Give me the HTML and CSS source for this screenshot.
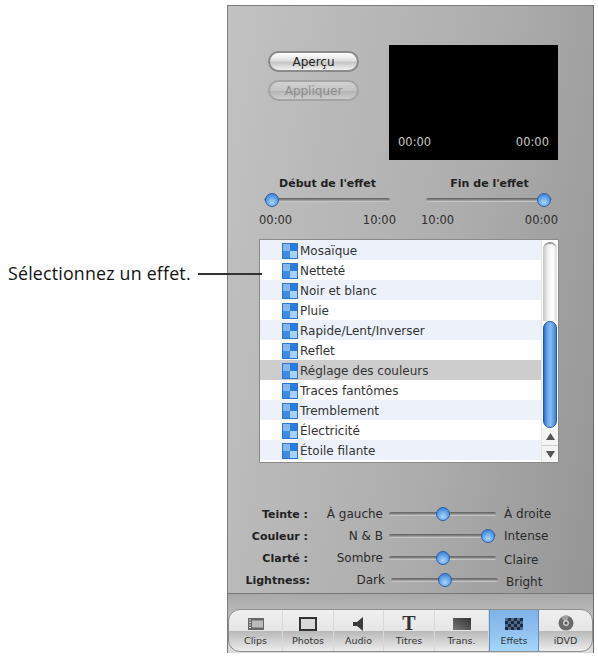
FILE: index.html
```html
<!DOCTYPE html>
<html lang="fr">
<head>
<meta charset="utf-8">
<title>Effets</title>
<link rel="stylesheet" href="styles.css">
</head>
<body>
<svg class="defs" width="0" height="0" aria-hidden="true">
  <symbol id="fx" viewBox="0 0 16 16">
    <rect width="16" height="16" fill="#2b74cf"/>
    <rect x="1" y="1" width="7" height="7" fill="#86b7ec"/>
    <rect x="8" y="1" width="7" height="7" fill="#2a7be0"/>
    <rect x="1" y="8" width="7" height="7" fill="#3f8be4"/>
    <rect x="8" y="8" width="7" height="7" fill="#a9d0f5"/>
  </symbol>
</svg>
<div class="page">
  <div class="callout">
    <span class="callout-text">Sélectionnez un effet.</span>
    <span class="callout-line"></span>
  </div>
  <div class="panel">
    <div class="editor">
      <div class="preview-row">
        <div class="buttons">
          <button class="pill">Aperçu</button>
          <button class="pill pill-off">Appliquer</button>
        </div>
        <div class="video">
          <span>00:00</span><span>00:00</span>
        </div>
      </div>
      <div class="trim-row">
        <div class="trim">
          <div class="trim-title">Début de l'effet</div>
          <div class="slider trim-slider"><i class="knob" style="left:1px"></i></div>
          <div class="trim-times"><span>00:00</span><span>10:00</span></div>
        </div>
        <div class="trim">
          <div class="trim-title">Fin de l'effet</div>
          <div class="slider trim-slider"><i class="knob" style="left:111px"></i></div>
          <div class="trim-times"><span>10:00</span><span>00:00</span></div>
        </div>
      </div>
      <div class="list">
        <ul class="rows">
          <li><svg class="fx"><use href="#fx"/></svg>Mosaïque</li>
          <li><svg class="fx"><use href="#fx"/></svg>Netteté</li>
          <li><svg class="fx"><use href="#fx"/></svg>Noir et blanc</li>
          <li><svg class="fx"><use href="#fx"/></svg>Pluie</li>
          <li><svg class="fx"><use href="#fx"/></svg>Rapide/Lent/Inverser</li>
          <li><svg class="fx"><use href="#fx"/></svg>Reflet</li>
          <li class="selected"><svg class="fx"><use href="#fx"/></svg>Réglage des couleurs</li>
          <li><svg class="fx"><use href="#fx"/></svg>Traces fantômes</li>
          <li><svg class="fx"><use href="#fx"/></svg>Tremblement</li>
          <li><svg class="fx"><use href="#fx"/></svg>Électricité</li>
          <li><svg class="fx"><use href="#fx"/></svg>Étoile filante</li>
        </ul>
        <div class="scrollbar">
          <div class="scroll-track"></div>
          <div class="scroll-thumb"></div>
          <div class="scroll-arrow"><svg width="9" height="7" viewBox="0 0 9 7"><path d="M4.5 0 9 7H0z" fill="#555"/></svg></div>
          <div class="scroll-arrow scroll-arrow-down"><svg width="9" height="7" viewBox="0 0 9 7"><path d="M0 0h9L4.500 7z" fill="#555"/></svg></div>
        </div>
      </div>
      <div class="adjust">
        <div class="adjust-row">
          <b>Teinte :</b><span class="low-label">À gauche</span>
          <div class="slider"><i class="knob" style="left:47px"></i></div>
          <span class="high-label">À droite</span>
        </div>
        <div class="adjust-row">
          <b>Couleur :</b><span class="low-label">N &amp; B</span>
          <div class="slider"><i class="knob" style="left:92px"></i></div>
          <span class="high-label">Intense</span>
        </div>
        <div class="adjust-row">
          <b>Clarté :</b><span class="low-label">Sombre</span>
          <div class="slider"><i class="knob" style="left:47px"></i></div>
          <span class="high-label high-label-low">Claire</span>
        </div>
        <div class="adjust-row adjust-row-last">
          <b>Lightness:</b><span class="low-label">Dark</span>
          <div class="slider"><i class="knob" style="left:47px"></i></div>
          <span class="high-label high-label-low">Bright</span>
        </div>
      </div>
    </div>
    <div class="dock">
      <nav class="tabs">
        <div class="tab">
          <svg width="18" height="14" viewBox="0 0 18 14"><rect x="1" y="1" width="16" height="12" fill="#666"/><rect x="5" y="3.500" width="11" height="7" fill="#bbb"/><path d="M2 3h2M2 5.500h2M2 8h2M2 10.500h2" stroke="#ddd" stroke-width="1"/></svg>
          <span>Clips</span>
        </div>
        <div class="tab">
          <svg width="18" height="14" viewBox="0 0 18 14"><rect x="1" y="1" width="16" height="12" fill="#d8d8d8" stroke="#333" stroke-width="2"/></svg>
          <span>Photos</span>
        </div>
        <div class="tab">
          <svg width="14" height="14" viewBox="0 0 14 14"><path d="M1 5h4l6-5v14L5 9H1z" fill="#3a3a3a"/></svg>
          <span>Audio</span>
        </div>
        <div class="tab">
          <em class="glyph">T</em>
          <span>Titres</span>
        </div>
        <div class="tab">
          <svg width="18" height="14" viewBox="0 0 18 14"><defs><linearGradient id="tr" x1="0" y1="1" x2="1" y2="0"><stop offset="0" stop-color="#777"/><stop offset="1" stop-color="#333"/></linearGradient></defs><rect width="18" height="12" y="1" fill="url(#tr)"/></svg>
          <span>Trans.</span>
        </div>
        <div class="tab tab-on">
          <svg width="18" height="14" viewBox="0 0 18 14"><rect y="1" width="18" height="12" fill="#1c2a40"/><path d="M0 1h3v3H0zM6 1h3v3H6zM12 1h3v3h-3zM3 4h3v3H3zM9 4h3v3H9zM15 4h3v3h-3zM0 7h3v3H0zM6 7h3v3H6zM12 7h3v3h-3zM3 10h3v3H3zM9 10h3v3H9zM15 10h3v3h-3z" fill="#4d6a8c"/></svg>
          <span>Effets</span>
        </div>
        <div class="tab">
          <svg width="16" height="16" viewBox="0 0 16 16"><circle cx="8" cy="8" r="7.500" fill="#6a6a6a"/><path d="M8 8 3 2.500A7.500 7.500 0 0 1 11 1.200z" fill="#a0a0a0"/><circle cx="8" cy="8" r="3" fill="#ccc"/><circle cx="8" cy="8" r="1.500" fill="#555"/></svg>
          <span>iDVD</span>
        </div>
      </nav>
    </div>
  </div>
</div>
</body>
</html>
```
FILE: styles.css
```css
* { box-sizing: border-box; }
html, body { margin: 0; padding: 0; background: #fff; }
body { font-family: "DejaVu Sans", sans-serif; font-size: 11px; color: #2a2a2a; }
.defs { position: absolute; }
.page { display: flex; width: 598px; height: 659px; overflow: hidden; }

.callout { width: 227px; flex: none; padding: 262px 0 0 8px; position: relative; }
.callout-text { font-family: "Open Sans", sans-serif; font-size: 17.800px; letter-spacing: 0.2px; line-height: 22px; color: #111; white-space: nowrap; }
.callout-line { position: absolute; left: 198px; top: 273px; width: 64px; height: 2px; background: #333; z-index: 2; }

.panel { width: 367px; height: 648px; margin-top: 5px; display: flex; flex-direction: column; flex: none;
  border: 1px solid #7c7c7c; border-bottom: 0; border-right-color: #6e6e6e;
  background: linear-gradient(100deg, #c2c2c2, #aeaeae 55%, #949494); }

.editor { height: 588px; flex: none; padding-top: 39px; border-bottom: 1px solid #777; }

.preview-row { display: flex; padding-left: 40px; height: 115px; }
.buttons { width: 91px; display: flex; flex-direction: column; gap: 8px; padding-top: 6px; margin-right: 30px; }
.pill { height: 21px; width: 91px; padding: 0; border-radius: 11px; border: 2px solid #8a8a8a;
  background: linear-gradient(#fff, #e0e0e0 45%, #c4c4c4 55%, #f2f2f2);
  font: 12px "DejaVu Sans", sans-serif; color: #222; }
.pill-off { border-color: #a4a4a4; color: #8d8d8d; background: linear-gradient(#d2d2d2, #c4c4c4 50%, #b4b4b4 55%, #cdcdcd); }
.video { width: 169px; height: 115px; background: #000; color: #c8c8c8; font-size: 11.500px; display: flex;
  justify-content: space-between; align-items: flex-end; padding: 0 9px 11px 9px; }

.trim-row { display: flex; gap: 25px; padding: 17px 0 0 31px; }
.trim { width: 137px; }
.trim-title { text-align: center; font-weight: bold; font-size: 11px; line-height: 14px; white-space: nowrap; color: #222; }
.trim-slider { margin: 2px 6px 0 5px; }
.trim-times { display: flex; justify-content: space-between; font-size: 11.500px; line-height: 14px; margin-top: 6px; color: #2c2c2c; }

.slider { position: relative; height: 14px; }
.slider::before { content: ""; position: absolute; left: 0; right: 0; top: 5px; height: 4px; border-radius: 2px;
  background: linear-gradient(#5e5e5e, #8d8d8d 50%, #d8d8d8); }
.knob { position: absolute; top: 0; width: 14px; height: 14px; border-radius: 50%; border: 1px solid #2a5da8;
  background: radial-gradient(circle at 50% 70%, #a9d6fb, #5d9fe6 55%, #2e6fc4); }

.list { display: flex; margin: 12px 0 0 31px; width: 300px; height: 224px; border: 1px solid #8a8a8a; background: #fff; }
.rows { list-style: none; margin: 0; padding: 0; width: 281px; flex: none; }
.rows li { height: 20px; display: flex; align-items: center; padding: 1px 0 0 22px; gap: 2px; font-size: 12px; white-space: nowrap; color: #333; }
.rows li:nth-child(odd) { background: #edf2fa; }
.rows li.selected { background: #cdcdcd; }
.fx { width: 16px; height: 16px; flex: none; }

.scrollbar { flex: 1; display: flex; flex-direction: column; border-left: 1px solid #e4e4e4; }
.scroll-track { height: 79px; margin: 2px 1px 0; border-radius: 8px 8px 0 0; border-top: 2px solid #9a9a9a;
  background: linear-gradient(90deg, #c4c4c4, #f4f4f4 40%, #fff 70%, #ddd); }
.scroll-thumb { height: 107px; margin: 0 1px; border-radius: 8px; border: 1px solid #1d57ad;
  background: linear-gradient(90deg, #2d6fc8, #6fa9ec 30%, #8abcf2 55%, #3a7fd8); }
.scroll-arrow { height: 17px; display: flex; align-items: center; justify-content: center; background: #f4f4f4; }
.scroll-arrow-down { border-top: 1px solid #ccc; }

.adjust { margin-top: 40px; font-size: 12px; }
.adjust-row { display: grid; grid-template-columns: 80px 69px 107px 1fr; column-gap: 6px; align-items: center; height: 22px; }
.adjust-row b { text-align: right; white-space: nowrap; color: #222; font-size: 11px; }
.low-label { text-align: right; white-space: nowrap; }
.high-label { white-space: nowrap; padding-left: 2px; }
.high-label-low { margin-top: 4px; }
.adjust-row-last { padding-left: 2px; }

.dock { flex: 1; padding: 15px 0 0 0; background: linear-gradient(#a8a8a8, #c8c8c8 60%, #dcdcdc); }
.tabs { display: grid; grid-template-columns: 54px 51px 50px 51px 54px 50px 1fr; height: 43px; border: 1px solid #8e8e8e;
  border-radius: 12px; overflow: hidden; background: linear-gradient(#efefef, #e6e6e6 50%, #b8b8b8 52%, #ededed); }
.tab { display: flex; flex-direction: column; align-items: center; justify-content: flex-end; padding-bottom: 4px; gap: 4px;
  font-size: 9.500px; line-height: 12px; color: #333; border-right: 1px solid #d8d8d8; }
.tab:last-child { border-right: 0; }
.tab-on { background: linear-gradient(#7fb2e6, #8fc0ef 50%, #a6d8fb); border-left: 1px solid #5e8fc0; border-right: 1px solid #5e8fc0; }
.glyph { margin-bottom: -4px; font: bold 20px/23px "Liberation Serif", serif; color: #333; }
```
